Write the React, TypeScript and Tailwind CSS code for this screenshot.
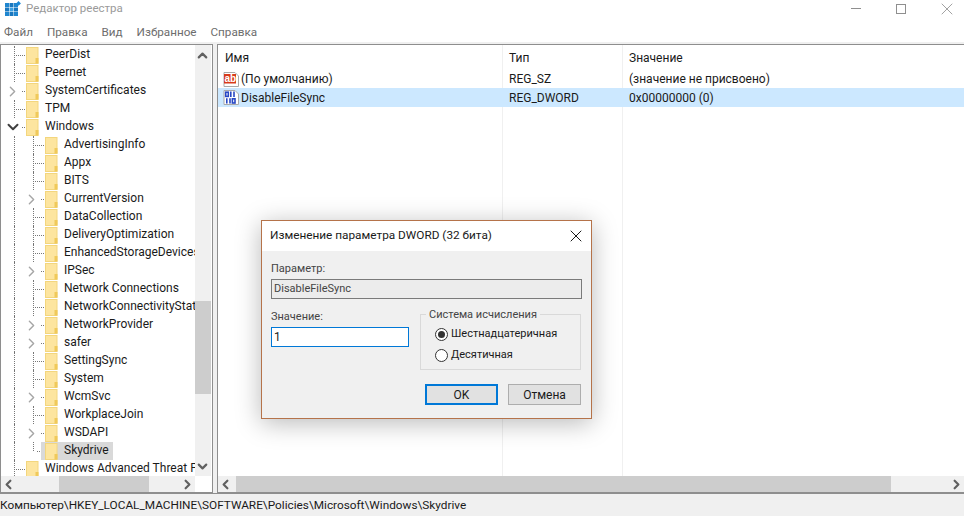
import { ChevronDown, ChevronLeft, ChevronRight, ChevronUp, X } from 'lucide-react';

const tree = [
  { label: 'PeerDist', level: 1 },
  { label: 'Peernet', level: 1 },
  { label: 'SystemCertificates', level: 1, arrow: 'right' },
  { label: 'TPM', level: 1 },
  { label: 'Windows', level: 1, arrow: 'down' },
  { label: 'AdvertisingInfo', level: 2 },
  { label: 'Appx', level: 2 },
  { label: 'BITS', level: 2 },
  { label: 'CurrentVersion', level: 2, arrow: 'right' },
  { label: 'DataCollection', level: 2 },
  { label: 'DeliveryOptimization', level: 2 },
  { label: 'EnhancedStorageDevices', level: 2 },
  { label: 'IPSec', level: 2, arrow: 'right' },
  { label: 'Network Connections', level: 2 },
  { label: 'NetworkConnectivityStatusIndicator', level: 2 },
  { label: 'NetworkProvider', level: 2, arrow: 'right' },
  { label: 'safer', level: 2, arrow: 'right' },
  { label: 'SettingSync', level: 2 },
  { label: 'System', level: 2 },
  { label: 'WcmSvc', level: 2, arrow: 'right' },
  { label: 'WorkplaceJoin', level: 2 },
  { label: 'WSDAPI', level: 2, arrow: 'right' },
  { label: 'Skydrive', level: 2, selected: true, last: true },
  { label: 'Windows Advanced Threat Protection', level: 1 },
];

function Folder() {
  return (
    <svg width="13" height="17" viewBox="0 0 13 17" className="shrink-0">
      <rect x="0.5" y="0.5" width="11.5" height="16" fill="#fde59f" stroke="#f3d67e" />
      <rect x="9.5" y="11" width="3" height="5.5" fill="#f0c95a" />
    </svg>
  );
}

function TreeRow({ label, level, arrow, selected, last }: { label: string; level: number; arrow?: string; selected?: boolean; last?: boolean }) {
  const hasLevel1Line = level === 2 || !arrow;
  return (
    <div className="relative flex h-[18px] items-center whitespace-nowrap">
      {/* вертикальные линии дерева */}
      {hasLevel1Line && <span className="absolute left-[13px] top-0 h-[18px] border-l border-dotted border-[#777]" />}
      {level === 2 && !arrow && (
        <span className={`absolute left-[32px] top-0 border-l border-dotted border-[#777] ${last ? 'h-[9px]' : 'h-[18px]'}`} />
      )}
      <div className={level === 2 ? 'relative flex w-[44px] shrink-0 items-center justify-end' : 'relative flex w-[25px] shrink-0 items-center justify-end'}>
        {arrow === 'right' && <ChevronRight size={17} strokeWidth={2} className="absolute right-[5px] text-[#a6a6a6]" />}
        {arrow === 'down' && <ChevronDown size={18} strokeWidth={2.6} className="absolute right-[4px] text-[#404040]" />}
        <span className={`mr-px border-t border-dotted border-[#777] ${arrow ? 'w-[3px]' : level === 2 && selected ? 'w-[7px]' : 'w-[11px]'} ${selected ? 'mr-[4px]' : ''}`} />
      </div>
      <div className={`relative flex h-[18px] items-center ${selected ? '-ml-[4px] bg-[#d9d9d9] pl-[4px] pr-[4px]' : ''}`}>
        <Folder />
        <span className="ml-[6px] pb-[2px] leading-[16px]">{label}</span>
      </div>
    </div>
  );
}

function HScrollbar({ thumbLeft, thumbWidth, className }: { thumbLeft: number; thumbWidth: number; className: string }) {
  return (
    <div className={`flex h-[16px] items-center justify-between bg-[#f0f0f0] ${className}`}>
      <ChevronLeft size={15} strokeWidth={3.5} className="text-[#606060]" />
      <ChevronRight size={15} strokeWidth={3.5} className="text-[#606060]" />
      <div className="absolute bottom-0 top-0 bg-[#cdcdcd]" style={{ left: thumbLeft, width: thumbWidth }} />
    </div>
  );
}

function AbIcon() {
  return (
    <svg width="17" height="17" viewBox="0 0 17 17" className="shrink-0">
      <path d="M1 1.5h11l3.5 3.5v10.5H1z" fill="#fff" stroke="#a9a9a9" />
      <rect x="1" y="3" width="12" height="9.5" fill="#d83b1c" />
      <text x="1.4" y="10.8" fontSize="10" fontWeight="700" fill="#fff" fontFamily="Liberation Sans, sans-serif">ab</text>
    </svg>
  );
}

function BinaryIcon() {
  return (
    <svg width="17" height="17" viewBox="0 0 17 17" className="shrink-0">
      <path d="M1 1.5h11l3.5 3.5v10.5H1z" fill="#fff" stroke="#a9a9a9" />
      <g fill="none" stroke="#2747c4" strokeWidth="1.6">
        <rect x="2.7" y="3.2" width="2.6" height="4.2" />
        <path d="M7.8 2.6v5.4M11 2.6v5.4" />
        <path d="M3.8 9.2v5.4" />
        <path d="M7 9.2v5.4" />
        <rect x="9.4" y="9.8" width="2.6" height="4.2" />
      </g>
    </svg>
  );
}

function RegistryIcon() {
  return (
    <svg width="17" height="16" viewBox="0 0 17 16">
      <rect x="0" y="2" width="4" height="4" fill="#1f86cf" />
      <rect x="4.5" y="2" width="4" height="4" fill="#1a78bf" />
      <rect x="9" y="2" width="4" height="4" fill="#1f86cf" />
      <rect x="0" y="6.5" width="4" height="4" fill="#1a78bf" />
      <rect x="4.5" y="6.5" width="4" height="4" fill="#3da0e2" />
      <rect x="9" y="6.5" width="4" height="4" fill="#1a78bf" />
      <rect x="0" y="11" width="4" height="4" fill="#1f86cf" />
      <rect x="4.5" y="11" width="4" height="4" fill="#1a78bf" />
      <rect x="9" y="11" width="4" height="4" fill="#1f86cf" />
      <path d="M13.5 0l2.4 2.4-2.4 2.4-2.4-2.4z" fill="#1c88d6" />
    </svg>
  );
}

function Radio({ checked, label }: { checked?: boolean; label: string }) {
  return (
    <div className="flex h-[21px] items-center gap-[3px]">
      <span className="flex h-[13px] w-[13px] items-center justify-center rounded-full border border-[#333] bg-white">
        {checked && <span className="h-[7px] w-[7px] rounded-full bg-[#333]" />}
      </span>
      <span>{label}</span>
    </div>
  );
}

export default function App() {
  return (
    <div className="relative flex h-[516px] w-[964px] flex-col overflow-hidden bg-white font-['Roboto','Noto_Sans',sans-serif] text-[12px] text-[#1a1a1a]">
      <header className="flex h-[17px] items-center justify-between pl-[5px]">
        <div className="flex items-center gap-[4px]">
          <RegistryIcon />
          <span className="text-[11.5px] text-[#9a9a9a]">Редактор реестра</span>
        </div>
        <div className="flex items-center pr-[7px] text-[#8f8f8f]">
          <span className="h-px w-[10px] bg-[#8f8f8f]" />
          <span className="ml-[35px] h-[10px] w-[10px] border border-[#8f8f8f]" />
          <X size={20} strokeWidth={1} className="ml-[31px]" />
        </div>
      </header>

      <nav className="flex h-[25px] items-center gap-[14px] pl-[4px] pt-[7px] text-[11.7px] text-[#6d6d6d]">
        <span>Файл</span>
        <span>Правка</span>
        <span>Вид</span>
        <span>Избранное</span>
        <span>Справка</span>
      </nav>

      <div className="flex h-[451px] gap-[4px] border-t-2 border-[#f0f0f0] bg-[#f0f0f0]">
        {/* дерево */}
        <section className="relative w-[213px] overflow-hidden border border-[#8e8e8e] bg-white">
          <div className="h-[431px] w-[194px] overflow-hidden pt-px">
            {tree.map((item) => (
              <TreeRow key={item.label} {...item} />
            ))}
          </div>
          <div className="absolute right-px top-0 h-[431px] w-[16px] bg-[#f0f0f0]">
            <ChevronUp size={15} strokeWidth={3.5} className="absolute left-0 top-[3px] text-[#606060]" />
            <div className="absolute left-0 right-0 top-[256px] h-[93px] bg-[#cdcdcd]" />
            <ChevronDown size={15} strokeWidth={3.5} className="absolute left-0 top-[414px] text-[#606060]" />
          </div>
          <HScrollbar thumbLeft={58} thumbWidth={90} className="absolute bottom-0 left-0 w-[194px]" />
        </section>

        {/* список значений */}
        <section className="relative flex-1 overflow-hidden border border-r-0 border-[#8e8e8e] bg-white">
          <span className="absolute bottom-0 left-[284px] top-0 border-l border-[#f0f0f0]" />
          <span className="absolute bottom-0 left-[404px] top-0 border-l border-[#f0f0f0]" />
          <div className="flex h-[25px] items-center">
            <span className="w-[284px] pl-[7px]">Имя</span>
            <span className="w-[120px] pl-[7px]">Тип</span>
            <span className="pl-[7px]">Значение</span>
          </div>
          <div className="flex h-[18px] items-center pl-[5px]">
            <div className="flex w-[279px] items-center gap-px">
              <AbIcon />
              <span>(По умолчанию)</span>
            </div>
            <span className="w-[120px] pl-[7px]">REG_SZ</span>
            <span className="pl-[7px]">(значение не присвоено)</span>
          </div>
          <div className="relative flex h-[19px] items-center bg-[#cce8ff] pl-[5px]">
            <div className="flex w-[279px] items-center gap-px">
              <BinaryIcon />
              <span>DisableFileSync</span>
            </div>
            <span className="w-[120px] pl-[7px]">REG_DWORD</span>
            <span className="pl-[7px]">0x00000000 (0)</span>
          </div>
          <HScrollbar thumbLeft={18} thumbWidth={655} className="absolute bottom-0 left-0 right-0" />
        </section>
      </div>

      <footer className="flex flex-1 items-center whitespace-nowrap border-t border-[#8e8e8e] bg-[#f0f0f0] pt-[2px] text-[11.8px]">
        Компьютер\HKEY_LOCAL_MACHINE\SOFTWARE\Policies\Microsoft\Windows\Skydrive
      </footer>

      {/* диалог поверх окна */}
      <div className="absolute left-[261px] top-[220px] flex h-[199px] w-[331px] flex-col border border-[#b5734a] bg-[#f0f0f0] shadow-[0_4px_24px_rgba(0,0,0,0.28)]">
        <div className="flex h-[30px] shrink-0 items-center justify-between bg-white pl-[8px] pr-[5px] text-[11.8px]">
          <span>Изменение параметра DWORD (32 бита)</span>
          <X size={20} strokeWidth={1.2} />
        </div>
        <div className="flex flex-1 flex-col px-[9px] pt-[9px] text-[11px]">
          <span className="leading-[18px] text-[#444]">Параметр:</span>
          <div className="mt-[1px] flex h-[20px] items-center border border-[#7a7a7a] bg-[#ececec] pl-[2px] text-[#444]">DisableFileSync</div>
          <div className="mt-[9px] flex gap-[11px]">
            <div className="w-[138px]">
              <span className="block leading-[18px] text-[#444]">Значение:</span>
              <div className="mt-[1px] flex h-[20px] items-center border border-[#0078d7] bg-white pl-[2px] text-[12px]">1</div>
            </div>
            <fieldset className="relative mt-[6px] h-[56px] w-[161px] border border-[#d9d9d9] pl-[14px] pt-[9px]">
              <span className="absolute left-[5px] top-[-9px] bg-[#f0f0f0] px-[3px] leading-[18px] text-[#444]">Система исчисления</span>
              <Radio checked label="Шестнадцатеричная" />
              <Radio label="Десятичная" />
            </fieldset>
          </div>
          <div className="mr-px mt-[14px] flex justify-end gap-[10px] text-[12px]">
            <button type="button" className="h-[21px] w-[73px] border-2 border-[#0078d7] bg-[#e1e1e1]">OK</button>
            <button type="button" className="h-[21px] w-[73px] border border-[#adadad] bg-[#e1e1e1]">Отмена</button>
          </div>
        </div>
      </div>
    </div>
  );
}
